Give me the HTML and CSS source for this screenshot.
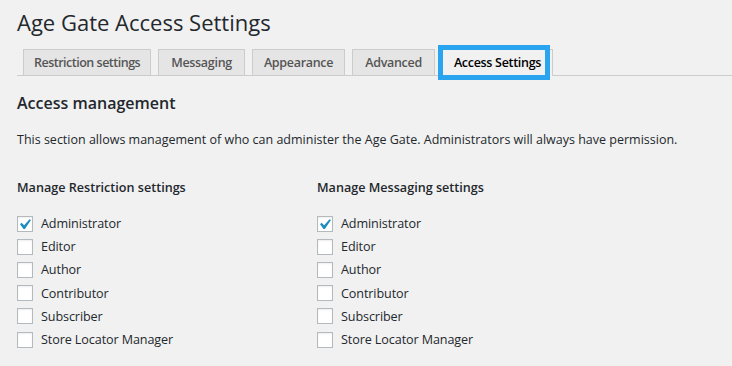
FILE: index.html
```html
<!DOCTYPE html>
<html lang="en">
<head>
  <meta charset="UTF-8">
  <title>Age Gate Access Settings</title>
  <link rel="stylesheet" href="styles.css">
</head>
<body>

<div class="wrap">
  <h1>Age Gate Access Settings</h1>

  <!-- Tabs -->
  <nav class="nav-tab-wrapper">
    <a href="#" class="nav-tab tab-first">Restriction settings</a>
    <a href="#" class="nav-tab">Messaging</a>
    <a href="#" class="nav-tab tab-tight">Appearance</a>
    <a href="#" class="nav-tab">Advanced</a>
    <a href="#" class="nav-tab nav-tab-active">Access Settings</a>
  </nav>

  <h2>Access management</h2>
  <p class="intro">This section allows management of who can administer the Age Gate. Administrators will always have permission.</p>

  <div class="columns">
    <div class="column">
      <h3>Manage Restriction settings</h3>
      <ul class="roles">
        <li><span class="check"><svg viewBox="0 0 20 20"><path d="M14.83 4.89l1.34.94-5.81 8.38H9.02L5.78 9.67l1.34-1.25 2.57 2.4z"/></svg></span>Administrator</li>
        <li><span class="check"></span>Editor</li>
        <li><span class="check"></span>Author</li>
        <li><span class="check"></span>Contributor</li>
        <li><span class="check"></span>Subscriber</li>
        <li><span class="check"></span>Store Locator Manager</li>
      </ul>
    </div>
    <div class="column">
      <h3>Manage Messaging settings</h3>
      <ul class="roles">
        <li><span class="check"><svg viewBox="0 0 20 20"><path d="M14.83 4.89l1.34.94-5.81 8.38H9.02L5.78 9.67l1.34-1.25 2.57 2.4z"/></svg></span>Administrator</li>
        <li><span class="check"></span>Editor</li>
        <li><span class="check"></span>Author</li>
        <li><span class="check"></span>Contributor</li>
        <li><span class="check"></span>Subscriber</li>
        <li><span class="check"></span>Store Locator Manager</li>
      </ul>
    </div>
  </div>
</div>

</body>
</html>
```

FILE: styles.css
```css
/* Halaman pengaturan gaya admin */
body {
  margin: 0;
  background-color: #f1f1f1;
  color: #23282d;
  font-family: "Open Sans", Arial, sans-serif;
  font-size: 13px;
}
.wrap {
  padding: 8px 0 0 17px;
}
h1 {
  margin: 0;
  font-size: 22px;
  font-weight: 400;
  line-height: 29px;
}
.nav-tab-wrapper {
  display: flex;
  margin-top: 12px;
  padding-left: 6px;
  border-bottom: 1px solid #ccc;
}
.nav-tab {
  margin-right: 7px;
  padding: 4px 12px 3px;
  border: 1px solid #ccc;
  border-bottom: none;
  background: #e5e5e5;
  color: #555;
  font-size: 12.5px;
  font-weight: 600;
  line-height: 18px;
  text-decoration: none;
  letter-spacing: -0.3px;
}
.tab-first {
  letter-spacing: -0.5px;
  padding: 4px 10px 3px;
}
.tab-tight {
  padding: 4px 11px 3px;
}
.nav-tab-active {
  position: relative;
  margin-bottom: -1px;
  padding: 4px 11px;
  background: #f1f1f1;
  color: #000;
}
.nav-tab-active::after {
  content: "";
  position: absolute;
  left: -5px;
  right: 2px;
  top: -5px;
  bottom: -4px;
  border: 5px solid #2ba4ef;
}
h2 {
  margin: 15px 0 0;
  font-size: 16px;
  font-weight: 600;
  line-height: 24px;
}
.intro {
  margin: 15px 0 0;
  line-height: 20px;
  font-size: 12.5px;
}
.columns {
  display: flex;
  margin-top: 29px;
}
.column {
  width: 300px;
}
h3 {
  margin: 0;
  font-size: 12.6px;
  font-weight: 600;
  line-height: 18px;
}
.roles {
  list-style: none;
  margin: 15px 0 0;
  padding: 0;
}
.roles li {
  display: flex;
  align-items: center;
  height: 23.2px;
  font-size: 12.6px;
  letter-spacing: -0.1px;
}
.check {
  width: 14px;
  height: 14px;
  margin-right: 8px;
  border: 1px solid #b4b9be;
  background: #fff;
  box-shadow: inset 0 1px 2px rgba(0, 0, 0, 0.07);
}
.check svg {
  display: block;
  width: 21px;
  height: 21px;
  margin: -3px 0 0 -4px;
  fill: #1e8cbe;
}
```
